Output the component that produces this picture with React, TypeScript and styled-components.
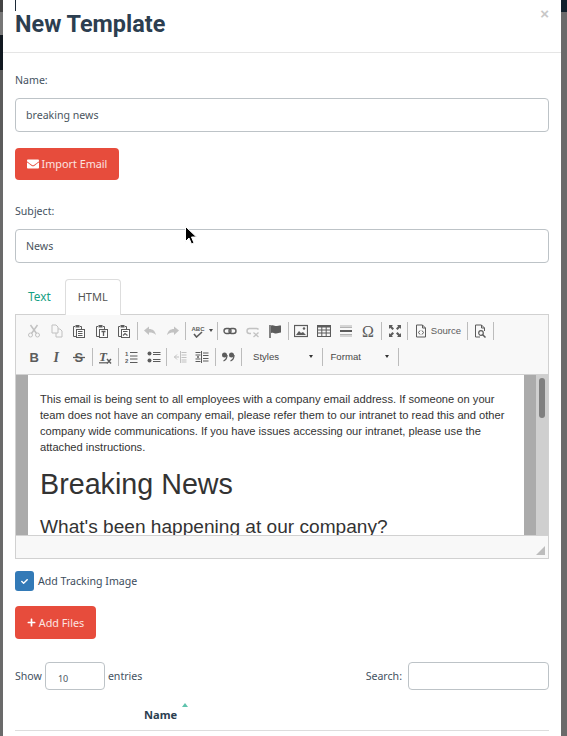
import styled, { createGlobalStyle } from "styled-components";
import type { ReactNode } from "react";
import { FaCheck, FaEnvelope, FaPlus } from "react-icons/fa";

const GlobalStyle = createGlobalStyle`
  html, body {
    margin: 0;
    padding: 0;
    background: #fff;
  }
  * {
    box-sizing: border-box;
  }
`;

const Page = styled.div`
  position: relative;
  display: flex;
  width: 567px;
  height: 736px;
  overflow: hidden;
  font-family: "Noto Sans", sans-serif;
  color: #2c3e50;
`;
const LeftBackdrop = styled.div`
  width: 3px;
  background: linear-gradient(
    #444 0 12px,
    #777 12px 35px,
    #111820 35px 70px,
    #5c5c5c 70px 170px,
    #6a6a6a 170px
  );
`;
const RightBackdrop = styled.div`
  width: 6px;
  background: linear-gradient(#10202c 0 12px, #6a6a6a 12px);
`;
const Modal = styled.div`
  width: 558px;
  background: #fff;
  display: flex;
  flex-direction: column;
`;
const Caret = styled.div`
  position: absolute;
  left: 15px;
  top: 0;
  width: 1px;
  height: 11px;
  background: #1c2a38;
`;
const Cursor = styled.svg`
  position: absolute;
  left: 185px;
  top: 226px;
`;
const Header = styled.div`
  height: 53px;
  padding: 8px 12px 0;
  border-bottom: 1px solid #e5e5e5;
  display: flex;
  justify-content: space-between;
  align-items: flex-start;
`;
const Title = styled.h4`
  margin: 0;
  font-family: Roboto, sans-serif;
  font-size: 23.4px;
  line-height: 33px;
  font-weight: 700;
  color: #2c3e50;
`;
const Close = styled.span`
  font-family: "Liberation Sans", sans-serif;
  font-size: 15px;
  font-weight: 700;
  line-height: 12px;
  color: #c8c8c8;
`;
const Body = styled.div`
  padding: 18px 12px 0;
  display: flex;
  flex-direction: column;
`;
const Label = styled.div`
  font-size: 10.6px;
  line-height: 18px;
  color: #44525f;
`;
const TextInput = styled.div<{ $top: number }>`
  margin-top: ${(p) => p.$top}px;
  height: 34px;
  width: 534px;
  padding: 0 10px 1px;
  display: flex;
  align-items: center;
  border: 1px solid #bdc3c7;
  border-radius: 4px;
  font-size: 10.6px;
  color: #4a5560;
`;
const RedButton = styled.div<{ $w: number; $h: number; $top: number }>`
  width: ${(p) => p.$w}px;
  height: ${(p) => p.$h}px;
  margin-top: ${(p) => p.$top}px;
  padding-bottom: 1px;
  display: flex;
  align-items: center;
  justify-content: center;
  gap: 3px;
  background: #e74c3c;
  border-radius: 4px;
  color: #fbe4e1;
  font-size: 10.8px;
  svg {
    display: block;
    color: #fff;
  }
`;
const SubjectLabel = styled(Label)`
  margin-top: 22px;
`;
const Tabs = styled.div`
  display: flex;
  height: 35px;
  margin-top: 16px;
  padding-left: 1px;
`;
const Tab = styled.div<{ $active?: boolean }>`
  height: ${(p) => (p.$active ? "36px" : "35px")};
  padding: 0 12px 3px;
  position: relative;
  z-index: 1;
  display: flex;
  align-items: center;
  font-size: 11px;
  color: ${(p) => (p.$active ? "#555" : "#16a085")};
  background: #fff;
  border: 1px solid ${(p) => (p.$active ? "#ddd" : "transparent")};
  border-bottom: 0;
  border-radius: 4px 4px 0 0;
`;
const TextTab = styled(Tab)`
  font-size: 11.8px;
  padding-left: 11px;
  margin-right: 1px;
`;
const Editor = styled.div`
  width: 534px;
  height: 245px;
  border: 1px solid #d1d1d1;
  display: flex;
  flex-direction: column;
  background: #f8f8f8;
`;
const Toolbar = styled.div`
  height: 60px;
  padding: 4px 0 0 7px;
  border-bottom: 1px solid #d1d1d1;
  display: flex;
  flex-direction: column;
  gap: 3px;
`;
const ToolRow = styled.div`
  display: flex;
  align-items: center;
  height: 23px;
`;
const ToolButton = styled.div<{ $w?: number; $off?: boolean }>`
  width: ${(p) => p.$w ?? 22.5}px;
  height: 23px;
  display: flex;
  align-items: center;
  justify-content: center;
  gap: 3px;
  color: #474747;
  opacity: ${(p) => (p.$off ? 0.3 : 0.88)};
  font-family: "Liberation Sans", sans-serif;
  font-size: 9.6px;
  svg {
    display: block;
    flex: none;
  }
`;
const Sep = styled.div`
  width: 1px;
  height: 18px;
  margin: 0 1.5px 0 1px;
  background: #bcbcbc;
`;
const Combo = styled.div<{ $w: number; $left: number }>`
  width: ${(p) => p.$w}px;
  height: 23px;
  padding: 0 8px 0 ${(p) => p.$left}px;
  display: flex;
  align-items: center;
  justify-content: space-between;
  font-family: "Liberation Sans", sans-serif;
  font-size: 9.6px;
  color: #484848;
`;
const TinyCaret = styled.span`
  width: 0;
  height: 0;
  border-left: 2.5px solid transparent;
  border-right: 2.5px solid transparent;
  border-top: 3px solid #333;
`;
const Content = styled.div`
  height: 160px;
  display: flex;
  overflow: hidden;
  background: #ababab;
  padding-left: 12px;
`;
const Sheet = styled.div`
  width: 496px;
  background: #fff;
  padding: 16px 12px 0;
  font-family: "Liberation Sans", sans-serif;
  color: #333;
  overflow: hidden;
`;
const Para = styled.p`
  margin: 0;
  font-size: 11.15px;
  line-height: 16px;
`;
const H1 = styled.h1`
  margin: 13px 0 0;
  font-size: 28.7px;
  line-height: 32px;
  font-weight: 400;
`;
const H2 = styled.h2`
  margin: 17px 0 0;
  font-size: 19.1px;
  line-height: 20px;
  font-weight: 400;
`;
const Track = styled.div`
  width: 12px;
  margin-left: auto;
  background: #cfcfcf;
  padding: 3px 3px 0;
`;
const Thumb = styled.div`
  width: 6px;
  height: 40px;
  border-radius: 3px;
  background: #808080;
`;
const EditorFooter = styled.div`
  flex: 1;
  border-top: 1px solid #d1d1d1;
  position: relative;
`;
const Resize = styled.svg`
  position: absolute;
  right: 3px;
  bottom: 3px;
`;
const CheckRow = styled.div`
  display: flex;
  align-items: center;
  gap: 4px;
  margin-top: 12px;
  font-size: 10.6px;
  color: #3c4c5c;
`;
const CheckBox = styled.span`
  width: 19px;
  height: 20px;
  border-radius: 3px;
  background: #337ab7;
  display: flex;
  align-items: center;
  justify-content: center;
  color: #fff;
`;
const TableTools = styled.div`
  margin-top: 23px;
  display: flex;
  justify-content: space-between;
  width: 534px;
  height: 28px;
  font-size: 10.6px;
  color: #44525f;
`;
const TableField = styled.div`
  display: flex;
  align-items: center;
  gap: 3px;
`;
const LengthSelect = styled.div`
  width: 60px;
  height: 28px;
  border: 1px solid #bdc3c7;
  border-radius: 4px;
  font-size: 9px;
  padding: 9px 0 0 12px;
  color: #4a5560;
`;
const SearchBox = styled.div`
  width: 141px;
  height: 28px;
  margin-left: 3px;
  border: 1px solid #bdc3c7;
  border-radius: 4px;
`;
const TableHead = styled.div`
  width: 534px;
  height: 41px;
  border-bottom: 1px solid #ddd;
  padding: 15px 0 0 129px;
  display: flex;
  font-size: 11.1px;
  font-weight: 700;
  line-height: 20px;
  color: #2c3e50;
`;
const SortArrow = styled.span`
  width: 0;
  height: 0;
  margin: -2px 0 0 5px;
  border-left: 3.5px solid transparent;
  border-right: 3.5px solid transparent;
  border-bottom: 4px solid #5fc3ad;
`;

const ink = "#474747";

const Ico = ({ children, w = 14 }: { children: ReactNode; w?: number }) => (
  <svg width={w} height={14} viewBox={`0 0 ${w} 14`} fill="none" stroke={ink} strokeWidth="1">
    {children}
  </svg>
);

const Board = ({ children }: { children?: ReactNode }) => (
  <Ico>
    <path d="M3 2.5H1.5v10H4M8 2.5H9.5V5" />
    <rect x="3.5" y="1" width="4" height="2.5" fill={ink} stroke="none" />
    <rect x="4.5" y="5.5" width="8" height="8" fill="#fff" />
    {children}
  </Ico>
);

const Glyph = ({ x, y, size, font = "Liberation Sans", italic, children }: { x: number; y: number; size: number; font?: string; italic?: boolean; children: string }) => (
  <text x={x} y={y} fontFamily={font} fontSize={size} fontWeight="700" fontStyle={italic ? "italic" : "normal"} fill={ink} stroke="none">
    {children}
  </text>
);

const icons = {
  cut: (
    <Ico>
      <circle cx="3.5" cy="11" r="2" />
      <circle cx="10.5" cy="11" r="2" />
      <path d="M4.5 9.5 10.5 1M9.5 9.5 3.5 1" strokeWidth="1.5" />
    </Ico>
  ),
  copy: (
    <Ico>
      <path d="M2 1h4l2 2v6H2zM8 5h2l2 2v6H6V9" />
    </Ico>
  ),
  paste: (
    <Board>
      <path d="M6 7.5h4.5M6 9.5h4.5M6 11.5h4.5" />
    </Board>
  ),
  pasteText: (
    <Board>
      <path d="M6.5 7.5h4M8.5 7.5V12" strokeWidth="1.3" />
    </Board>
  ),
  pasteWord: (
    <Board>
      <path d="M6 7.5h4.5M6 11.5l2-2 2.5 2" strokeWidth="1.2" />
    </Board>
  ),
  undo: (
    <Ico>
      <path d="M1 6.5 6 2.5V5c4 0 6 2 7 6-2-2-4-2.5-7-2.5V11z" fill={ink} stroke="none" />
    </Ico>
  ),
  redo: (
    <Ico>
      <path d="M13 6.5 8 2.5V5c-4 0-6 2-7 6 2-2 4-2.5 7-2.5V11z" fill={ink} stroke="none" />
    </Ico>
  ),
  link: (
    <Ico>
      <rect x="1" y="4.5" width="7" height="5" rx="2.5" strokeWidth="1.4" />
      <rect x="6" y="4.5" width="7" height="5" rx="2.5" strokeWidth="1.4" />
    </Ico>
  ),
  unlink: (
    <Ico>
      <path d="M5 9.5H3.5a2.5 2.5 0 0 1 0-5H8M8 4.5h2.5a2.5 2.5 0 0 1 2 1" strokeWidth="1.4" />
      <path d="M7.5 8.5l5 4.5M12.5 8.5l-5 4.5" strokeWidth="1.3" />
    </Ico>
  ),
  flag: (
    <Ico>
      <path d="M2 1v13" strokeWidth="1.5" />
      <path d="M3 1.5c3-1 4 1 6 .5 2-.5 3-.5 4-.5v7c-2 0-3 1-5 1s-2-1.5-5-.5z" fill={ink} stroke="none" />
    </Ico>
  ),
  image: (
    <Ico>
      <rect x=".5" y="1.5" width="13" height="11" strokeWidth="1.2" />
      <path d="M2 11l3-4 2 2 2-1 3 3z" fill={ink} stroke="none" />
      <circle cx="10" cy="4.5" r="1.2" fill={ink} stroke="none" />
    </Ico>
  ),
  table: (
    <Ico>
      <path d="M.5 1.5h13v11H.5z" strokeWidth="1.1" />
      <path d="M.5 2.5h13" strokeWidth="2" />
      <path d="M.5 6h13M.5 9h13M4.8 2v10M9.2 2v10" />
    </Ico>
  ),
  rule: (
    <Ico>
      <path d="M1 2h12M1 3.5h12" stroke="#aaa" />
      <path d="M1 7h12" strokeWidth="2" />
      <path d="M1 10.5h12M1 12h12" stroke="#aaa" />
    </Ico>
  ),
  omega: (
    <svg width="16" height="16" viewBox="0 0 16 16">
      <text x="1" y="14" fontFamily="Liberation Serif" fontSize="16" fill={ink}>
        Ω
      </text>
    </svg>
  ),
  maximize: (
    <Ico>
      <path d="M1 1h4L3.8 2.2 6 4.5 4.5 6 2.2 3.8 1 5zM13 1v4l-1.2-1.2L9.5 6 8 4.500l2.200-2.300L9 1zM1 13V9l1.200 1.200L4.500 8 6 9.500l-2.200 2.300L5 13zM13 13H9l1.200-1.200L8 9.500 9.500 8l2.300 2.200L13 9z" fill={ink} stroke="none" />
    </Ico>
  ),
  source: (
    <Ico>
      <path d="M2.5 1h6l3 3v9h-9zM8.5 1v3h3" />
      <path d="M6 6.5 4.5 8.5 6 10.500M8 6.500l1.500 2-1.500 2" />
    </Ico>
  ),
  preview: (
    <Ico>
      <path d="M7 13H2.5V1h6l3 3v3M8.500 1v3h3" />
      <circle cx="8" cy="9" r="2.3" strokeWidth="1.2" />
      <path d="M9.700 10.700 12.500 13.500" strokeWidth="1.5" />
    </Ico>
  ),
  spell: (
    <Ico w={15}>
      <Glyph x={0.5} y={6.5} size={6}>ABC</Glyph>
      <path d="M3 10l2.500 3L11 8" strokeWidth="1.6" />
    </Ico>
  ),
  bold: (
    <Ico>
      <Glyph x={2.5} y={12} size={13}>B</Glyph>
    </Ico>
  ),
  italic: (
    <Ico>
      <Glyph x={3.5} y={12} size={14} font="Liberation Serif" italic>I</Glyph>
    </Ico>
  ),
  strike: (
    <Ico>
      <Glyph x={2.5} y={12} size={13}>S</Glyph>
      <path d="M1 7.5h12" strokeWidth="1.3" />
    </Ico>
  ),
  clear: (
    <Ico>
      <Glyph x={1} y={11} size={13} font="Liberation Serif" italic>T</Glyph>
      <path d="M1 12.8h8" strokeWidth="1.2" />
      <path d="M9 9l4 4.5M13 9l-4 4.5" strokeWidth="1.4" />
    </Ico>
  ),
  ol: (
    <Ico>
      <Glyph x={1} y={6} size={6}>1</Glyph>
      <Glyph x={1} y={13} size={6}>2</Glyph>
      <path d="M6 2.5h7.500M6 6h7.500M6 9h7.500M6 12.500h7.500" strokeWidth="1.2" />
    </Ico>
  ),
  ul: (
    <Ico>
      <circle cx="2.5" cy="3.5" r="2" fill={ink} stroke="none" />
      <circle cx="2.5" cy="10.5" r="2" fill={ink} stroke="none" />
      <path d="M6 2.5h7.500M6 4.500h7.500M6 9.500h7.500M6 11.500h7.500" strokeWidth="1.1" />
    </Ico>
  ),
  outdent: (
    <Ico>
      <path d="M7.5 1v12M8.5 2.5h5M8.5 5h5M8.5 7.5h5M8.5 10h5M8.5 12h5M1 7h5M4 4.5 1.5 7 4 9.5" />
    </Ico>
  ),
  indent: (
    <Ico>
      <path d="M6.5 1v12M.5 2.5h5M.5 5h5M.5 9h5M.5 11.5h5M8 3h5.500M8 5.500h5.500M8 8.500h5.500M8 11h5.500" />
      <path d="M2 7h2" strokeWidth="1.5" />
    </Ico>
  ),
  quote: (
    <Ico>
      <circle cx="3.5" cy="5" r="2.5" fill={ink} stroke="none" />
      <circle cx="10.5" cy="5" r="2.5" fill={ink} stroke="none" />
      <path d="M6 5c0 3-1 5-3.500 6M13 5c0 3-1 5-3.500 6" strokeWidth="1.3" />
    </Ico>
  ),
};

const App = () => {
  return (
    <Page>
      <GlobalStyle />
      <LeftBackdrop />
      <Modal>
        <Header>
          <Title>New Template</Title>
          <Close>×</Close>
        </Header>
        <Body>
          <Label>Name:</Label>
          <TextInput $top={9}>breaking news</TextInput>
          <RedButton $w={104} $h={32} $top={16}>
            <FaEnvelope size={12} />
            Import Email
          </RedButton>
          <SubjectLabel>Subject:</SubjectLabel>
          <TextInput $top={9}>News</TextInput>
          <Tabs>
            <TextTab>Text</TextTab>
            <Tab $active>HTML</Tab>
          </Tabs>
          <Editor>
            <Toolbar>
              <ToolRow>
                <ToolButton $off>{icons.cut}</ToolButton>
                <ToolButton $off>{icons.copy}</ToolButton>
                <ToolButton>{icons.paste}</ToolButton>
                <ToolButton>{icons.pasteText}</ToolButton>
                <ToolButton>{icons.pasteWord}</ToolButton>
                <Sep />
                <ToolButton $off>{icons.undo}</ToolButton>
                <ToolButton $off>{icons.redo}</ToolButton>
                <Sep />
                <ToolButton $w={28}>
                  {icons.spell}
                  <TinyCaret />
                </ToolButton>
                <Sep />
                <ToolButton>{icons.link}</ToolButton>
                <ToolButton $off>{icons.unlink}</ToolButton>
                <ToolButton>{icons.flag}</ToolButton>
                <Sep />
                <ToolButton>{icons.image}</ToolButton>
                <ToolButton>{icons.table}</ToolButton>
                <ToolButton>{icons.rule}</ToolButton>
                <ToolButton>{icons.omega}</ToolButton>
                <Sep />
                <ToolButton>{icons.maximize}</ToolButton>
                <Sep />
                <ToolButton $w={56}>
                  {icons.source}
                  Source
                </ToolButton>
                <Sep />
                <ToolButton>{icons.preview}</ToolButton>
                <Sep />
              </ToolRow>
              <ToolRow>
                <ToolButton>{icons.bold}</ToolButton>
                <ToolButton>{icons.italic}</ToolButton>
                <ToolButton>{icons.strike}</ToolButton>
                <Sep />
                <ToolButton>{icons.clear}</ToolButton>
                <Sep />
                <ToolButton>{icons.ol}</ToolButton>
                <ToolButton>{icons.ul}</ToolButton>
                <Sep />
                <ToolButton $off>{icons.outdent}</ToolButton>
                <ToolButton>{icons.indent}</ToolButton>
                <Sep />
                <ToolButton>{icons.quote}</ToolButton>
                <Sep />
                <Combo $w={78} $left={10}>
                  Styles
                  <TinyCaret />
                </Combo>
                <Sep />
                <Combo $w={72} $left={6}>
                  Format
                  <TinyCaret />
                </Combo>
                <Sep />
              </ToolRow>
            </Toolbar>
            <Content>
              <Sheet>
                <Para>
                  This email is being sent to all employees with a company email address. If someone on your team does not have an company email, please refer them to our intranet to read this and other company wide communications. If you have issues accessing our intranet, please use the attached instructions.
                </Para>
                <H1>Breaking News</H1>
                <H2>What's been happening at our company?</H2>
              </Sheet>
              <Track>
                <Thumb />
              </Track>
            </Content>
            <EditorFooter>
              <Resize width="9" height="9" viewBox="0 0 10 10">
                <path d="M10 0v10H0z" fill="#bdbdbd" />
              </Resize>
            </EditorFooter>
          </Editor>
          <CheckRow>
            <CheckBox>
              <FaCheck size={7} />
            </CheckBox>
            Add Tracking Image
          </CheckRow>
          <RedButton $w={81} $h={33} $top={15}>
            <FaPlus size={9} />
            Add Files
          </RedButton>
          <TableTools>
            <TableField>
              Show
              <LengthSelect>10</LengthSelect>
              entries
            </TableField>
            <TableField>
              Search:
              <SearchBox />
            </TableField>
          </TableTools>
          <TableHead>
            Name
            <SortArrow />
          </TableHead>
        </Body>
      </Modal>
      <RightBackdrop />
      <Caret />
      <Cursor width="13" height="19" viewBox="0 0 13 19">
        <path d="M.5.5v15L4 12l2.500 6 2.500-1-2.500-6h5z" fill="#000" stroke="#fff" strokeWidth="1" />
      </Cursor>
    </Page>
  );
};

export default App;
